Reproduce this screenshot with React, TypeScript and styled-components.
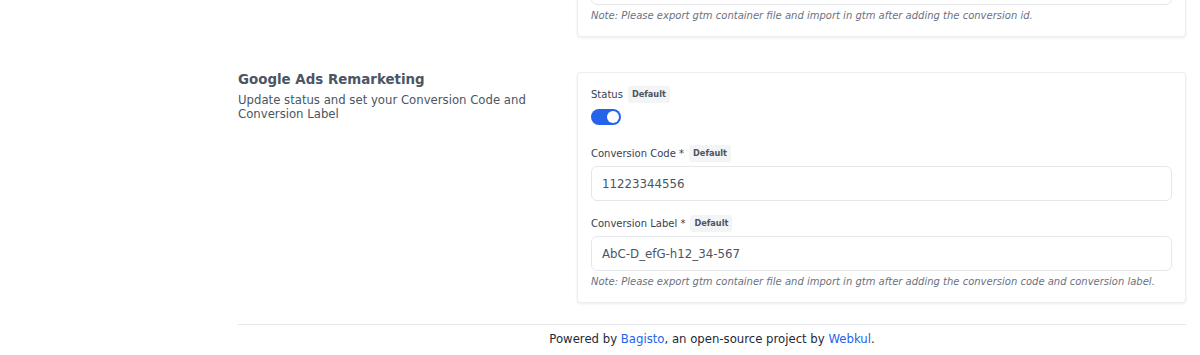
import React from "react";
import styled, { createGlobalStyle } from "styled-components";

const Global = createGlobalStyle`
  html, body { margin: 0; padding: 0; background: #ffffff; }
  body { font-family: "DejaVu Sans", "Liberation Sans", sans-serif; overflow: hidden; }
  * { box-sizing: border-box; }
`;

const Page = styled.div`
  width: 1200px;
  padding: 0 14px 0 238px;
`;

const Sections = styled.div`
  display: flex;
  flex-direction: column;
  gap: 35px;
  margin-top: -125px;
`;

const Section = styled.section`
  display: grid;
  grid-template-columns: 307px 609px;
  column-gap: 32px;
  align-items: start;
`;

const Intro = styled.div`
  display: flex;
  flex-direction: column;
  gap: 7px;
  padding-top: 1px;
`;

const Title = styled.h2`
  margin: 0;
  font-size: 13.4px;
  font-weight: 700;
  color: #4b5563;
  line-height: 13px;
`;

const Description = styled.p`
  margin: 0;
  font-size: 11.7px;
  line-height: 14px;
  color: #4b5563;
`;

const Card = styled.div`
  background: #fff;
  border: 1px solid #eceef1;
  border-radius: 4px;
  box-shadow: 0 1px 3px rgba(0, 0, 0, 0.08);
  padding: 13px 13px 14px 13px;
  display: flex;
  flex-direction: column;
`;

const Field = styled.div<{ $mb?: number }>`
  display: flex;
  flex-direction: column;
  margin-bottom: ${(p) => p.$mb ?? 0}px;
`;

const LabelRow = styled.div<{ $gap: number }>`
  display: flex;
  align-items: center;
  gap: 5px;
  height: 17px;
  margin-bottom: ${(p) => p.$gap}px;
`;

const Label = styled.label`
  font-size: 10px;
  color: #374151;
  line-height: 14px;
`;

const Badge = styled.span`
  font-size: 8.2px;
  font-weight: 700;
  color: #4b5563;
  background: #f3f4f6;
  border-radius: 3px;
  padding: 3px 4px;
  line-height: 11px;
`;

const Toggle = styled.div<{ $on: boolean }>`
  position: relative;
  width: 30px;
  height: 16px;
  border-radius: 8px;
  background: ${(p) => (p.$on ? "#2563eb" : "#d1d5db")};
  &::after {
    content: "";
    position: absolute;
    top: 2px;
    left: ${(p) => (p.$on ? "16px" : "2px")};
    width: 12px;
    height: 12px;
    border-radius: 50%;
    background: #fff;
  }
`;

const Input = styled.div`
  height: 35px;
  border: 1px solid #e5e7eb;
  border-radius: 6px;
  padding: 0 10px;
  display: flex;
  align-items: center;
  font-size: 11.8px;
  color: #4b5563;
`;

const Note = styled.p`
  margin: 4px 0 0;
  font-size: 10px;
  font-style: italic;
  color: #6b7280;
  line-height: 13px;
`;

const Footer = styled.footer`
  margin-top: 21px;
  border-top: 1px solid #e5e7eb;
  padding: 7px 0;
  text-align: center;
  font-size: 11.7px;
  color: #1f2937;
  line-height: 14px;
`;

const Link = styled.a`
  color: #2563eb;
  text-decoration: none;
`;

function DefaultLabel({ text, gap }: { text: string; gap: number }) {
  return (
    <LabelRow $gap={gap}>
      <Label>{text}</Label>
      <Badge>Default</Badge>
    </LabelRow>
  );
}

export default function App() {
  return (
    <Page>
      <Global />
      <Sections>
        <Section>
          <Intro>
            <Title>Google Ads Conversion Tracking</Title>
            <Description>Update status and set your Conversion ID</Description>
          </Intro>
          <Card>
            <Field $mb={20}>
              <DefaultLabel text="Status" gap={6} />
              <Toggle $on />
            </Field>
            <Field>
              <DefaultLabel text="Conversion ID *" gap={5} />
              <Input>AW-123456789</Input>
            </Field>
            <Note>Note: Please export gtm container file and import in gtm after adding the conversion id.</Note>
          </Card>
        </Section>
        <Section>
          <Intro>
            <Title>Google Ads Remarketing</Title>
            <Description>
              Update status and set your Conversion Code and Conversion Label
            </Description>
          </Intro>
          <Card>
            <Field $mb={20}>
              <DefaultLabel text="Status" gap={6} />
              <Toggle $on />
            </Field>
            <Field $mb={14}>
              <DefaultLabel text="Conversion Code *" gap={4} />
              <Input>11223344556</Input>
            </Field>
            <Field>
              <DefaultLabel text="Conversion Label *" gap={4} />
              <Input>AbC-D_efG-h12_34-567</Input>
            </Field>
            <Note>
              Note: Please export gtm container file and import in gtm after adding the conversion code and conversion label.
            </Note>
          </Card>
        </Section>
      </Sections>
      <Footer>
        Powered by <Link href="#">Bagisto</Link>, an open-source project by{" "}
        <Link href="#">Webkul</Link>.
      </Footer>
    </Page>
  );
}
